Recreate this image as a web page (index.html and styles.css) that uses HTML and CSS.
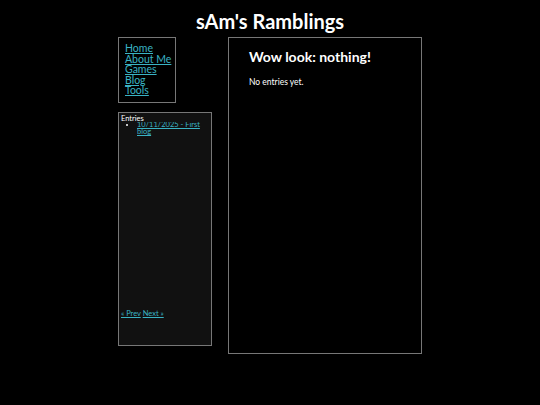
FILE: index.html
```html
<!DOCTYPE html>
<html>
<head>
<meta charset="utf-8">
<link rel="stylesheet" href="styles.css">
</head>
<body>
<h1 class="site-title">sAm's Ramblings</h1>
<div class="layout">
  <div class="sidebar">
    <nav class="nav-box">
      <a href="#">Home</a>
      <a href="#">About Me</a>
      <a href="#">Games</a>
      <a href="#">Blog</a>
      <a href="#">Tools</a>
    </nav>
    <div class="entries-box">
      <div class="entries-title">Entries</div>
      <ul class="entries-list">
        <li><a href="#">10/11/2025 - First blog</a></li>
      </ul>
      <div class="pager"><a href="#">« Prev</a> <a href="#">Next »</a></div>
    </div>
  </div>
  <main class="main-box">
    <h2 class="main-title">Wow look: nothing!</h2>
    <p class="main-text">No entries yet.</p>
  </main>
</div>
</body>
</html>
```
FILE: styles.css
```css
html, body {
  margin: 0;
  padding: 0;
  background: #000;
  color: #fff;
  font-family: "Lato", "DejaVu Sans", sans-serif;
}
a {
  color: #3ab3c4;
}
.site-title {
  margin: 0;
  padding-top: 9px;
  height: 28px;
  text-align: center;
  font-size: 20px;
  line-height: 24px;
  font-weight: 700;
}
.layout {
  display: flex;
  justify-content: center;
  gap: 16px;
}
.sidebar {
  width: 94px;
  display: flex;
  flex-direction: column;
  align-items: flex-start;
  gap: 9px;
}
.nav-box {
  box-sizing: border-box;
  width: 58px;
  height: 66px;
  border: 1px solid #777;
  padding: 5px 0 0 6px;
  display: flex;
  flex-direction: column;
  font-size: 10.5px;
  line-height: 10.5px;
}
.entries-box {
  box-sizing: border-box;
  width: 94px;
  height: 234px;
  border: 1px solid #777;
  background: #111;
  padding: 2px 2px 0 2px;
  display: flex;
  flex-direction: column;
  font-size: 7.5px;
  line-height: 8px;
}
.entries-title {
  position: relative;
  z-index: 1;
  background: #111;
  height: 7px;
}
.entries-list {
  margin: -1px 0 0 0;
  padding-left: 16px;
  line-height: 7px;
}
.pager {
  margin-top: auto;
  margin-bottom: 27px;
}
.main-box {
  box-sizing: border-box;
  width: 194px;
  height: 317px;
  border: 1px solid #777;
  padding: 10px 20px;
}
.main-title {
  margin: 0;
  font-size: 14px;
  line-height: 18px;
  font-weight: 700;
}
.main-text {
  margin: 11px 0 0 0;
  font-size: 8.5px;
  line-height: 11px;
}
```
